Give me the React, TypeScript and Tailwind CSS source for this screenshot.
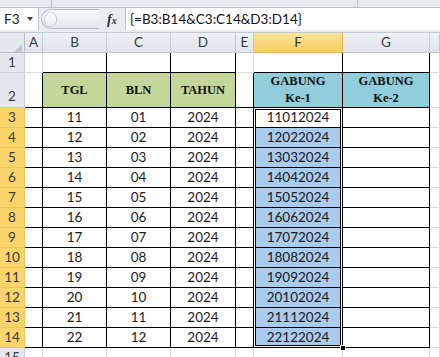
import clsx from "clsx";

const SANS = "font-['Lato','Liberation_Sans',sans-serif]";
const SERIF = "font-['Liberation_Serif',serif]";

const COLS = [
  { id: "", w: "w-[25px]" },
  { id: "A", w: "w-[18px]" },
  { id: "B", w: "w-[64px]" },
  { id: "C", w: "w-[64px]" },
  { id: "D", w: "w-[65px]" },
  { id: "E", w: "w-[18px]" },
  { id: "F", w: "w-[89px]" },
  { id: "G", w: "w-[87px]" },
  { id: "H", w: "flex-1" },
];

// index 0 = column header row, 1..15 = sheet rows 1..15
const ROWS = Array.from({ length: 16 }, (_, i) => i);

const data = Array.from({ length: 12 }, (_, i) => {
  const tgl = String(11 + i);
  const bln = String(i + 1).padStart(2, "0");
  return { tgl, bln, tahun: "2024", gabung: tgl + bln + "2024" };
});

type Spec = {
  text?: React.ReactNode;
  bg?: string;
  right?: string;
  bottom?: string;
  head?: boolean;
  bold?: boolean;
};

function spec(col: string, r: number): Spec {
  const grid = "border-[#dadcdd]";
  if (r === 0) {
    if (col === "") return { head: true, bg: "bg-[#e4e8ed]", right: "border-[#b7bec8]", bottom: "border-[#b7bec8]" };
    return {
      head: true,
      text: col === "H" ? "" : col,
      bg: col === "F" ? "bg-gradient-to-b from-[#fbe39a] to-[#f6cf5e]" : "bg-gradient-to-b from-[#eef1f5] to-[#e0e4ea]",
      right: col === "F" ? "border-[#e2b64a]" : "border-[#c3c9d1]",
      bottom: col === "F" ? "border-[#e2b64a]" : "border-[#b7bec8]",
    };
  }
  if (col === "") {
    const sel = r >= 3 && r <= 14;
    return {
      head: true,
      text: r,
      bg: sel ? "bg-[#fbd56c]" : "bg-[#e4e8ed]",
      right: sel ? "border-[#e0b24a]" : "border-[#b7bec8]",
      bottom: sel ? "border-[#f0c659]" : "border-[#c9cfd6]",
    };
  }
  const inTable = ["B", "C", "D", "F", "G"].includes(col);
  if (r === 1) return { right: grid, bottom: inTable ? "border-black" : grid };
  if (r === 15) return { right: grid, bottom: grid };
  if (col === "A" || col === "E") return { right: "border-black", bottom: grid };
  if (col === "H") return { right: grid, bottom: grid };

  const black = { right: "border-black", bottom: "border-black" };
  const d = data[r - 3];
  if (r === 2) {
    if (col === "B") return { ...black, bold: true, bg: "bg-[#c4d79b]", text: "TGL" };
    if (col === "C") return { ...black, bold: true, bg: "bg-[#c4d79b]", text: "BLN" };
    if (col === "D") return { ...black, bold: true, bg: "bg-[#c4d79b]", text: "TAHUN" };
    return {
      ...black,
      bold: true,
      bg: "bg-[#92cddc]",
      text: (
        <>
          GABUNG
          <br />
          {col === "F" ? "Ke-1" : "Ke-2"}
        </>
      ),
    };
  }
  if (col === "B") return { ...black, text: d.tgl };
  if (col === "C") return { ...black, text: d.bln };
  if (col === "D") return { ...black, text: d.tahun };
  if (col === "F") return { ...black, text: d.gabung, bg: r === 3 ? "bg-white" : "bg-[#a9cbee]" };
  return { ...black };
}

function Cell({ col, r }: { col: string; r: number }) {
  const s = spec(col, r);
  return (
    <div
      className={clsx(
        "flex shrink-0 items-center justify-center overflow-hidden border-r border-b text-center",
        r === 2 ? "h-[35px]" : "h-[20px]",
        s.bg ?? "bg-white",
        s.right,
        s.bottom,
        s.bold ? `${SERIF} text-[12.5px] leading-[17px] font-bold text-[#111]` : `${SANS} text-[13.5px] text-[#1a1a1a]`,
        s.head && "text-[#3a3a3a]",
        r === 2 && col === "" && "items-end pb-[1px]"
      )}
    >
      {col === "" && r === 0 ? (
        <div className="mt-auto ml-auto mr-[2px] mb-[2px] h-0 w-0 border-l-[11px] border-t-[11px] border-l-transparent border-t-transparent border-b-0 border-r-[0px] [border-bottom:11px_solid_#c4c9d0]" />
      ) : (
        s.text
      )}
    </div>
  );
}

function Column({ col, w }: { col: string; w: string }) {
  if (col !== "F") {
    return (
      <div className={clsx("flex flex-col", w)}>
        {ROWS.map((r) => (
          <Cell key={r} col={col} r={r} />
        ))}
      </div>
    );
  }
  return (
    <div className={clsx("flex flex-col", w)}>
      {ROWS.slice(0, 3).map((r) => (
        <Cell key={r} col={col} r={r} />
      ))}
      <div className="relative">
        {ROWS.slice(3, 15).map((r) => (
          <Cell key={r} col={col} r={r} />
        ))}
        {/* selection border */}
        <div className="pointer-events-none absolute -top-px -left-px right-0 bottom-0 border border-black shadow-[inset_0_0_0_1px_#fff,inset_0_0_0_2px_#000]" />
        <div className="absolute -right-[3px] -bottom-[3px] h-[6px] w-[6px] border border-white bg-black" />
      </div>
      <Cell col={col} r={15} />
    </div>
  );
}

export default function App() {
  return (
    <div className="h-[357px] w-[440px] overflow-hidden bg-white">
      {/* ribbon bottom */}
      <div className="flex h-[8px] border-b border-[#b9c2cc] bg-[#e7ebf0]">
        <div className="w-[52px] border-r border-[#b9c2cc]" />
        <div className="w-[306px] border-r border-[#b9c2cc]" />
      </div>
      {/* formula bar */}
      <div className="flex h-[25px] items-stretch border-b border-[#c3c9d1] bg-[#e9edf2] pb-[2px]">
        <div className={clsx("flex w-[39px] items-center justify-between border-r border-[#b9c2cc] bg-white pl-[4px] pr-[5px] text-[13.5px] text-[#222]", SANS)}>
          <span>F3</span>
          <span className="h-0 w-0 border-x-[3.5px] border-t-[4px] border-x-transparent border-t-[#444]" />
        </div>
        <div className="flex w-[86px] items-center pl-[2px]">
          <div className="flex h-[20px] w-[58px] items-center rounded-l-full border border-r-0 border-[#b3bac4] bg-gradient-to-b from-[#f7f8fa] to-[#e3e7ec] pl-[2px]">
            <div className="h-[15px] w-[13px] rounded-full border border-[#c4cad2] bg-gradient-to-b from-white to-[#e6e9ed]" />
          </div>
          <span className={clsx("ml-[8px] text-[14px] font-bold italic text-[#333]", SERIF)}>
            f<span className="text-[10px]">x</span>
          </span>
        </div>
        <div className={clsx("flex flex-1 items-center border-l border-[#b9c2cc] bg-white pl-[4px] text-[13.5px] text-[#111]", SANS)}>
          {"{=B3:B14&C3:C14&D3:D14}"}
        </div>
      </div>
      {/* sheet */}
      <div className="flex">
        {COLS.map((c) => (
          <Column key={c.id || "hdr"} col={c.id} w={c.w} />
        ))}
      </div>
    </div>
  );
}
